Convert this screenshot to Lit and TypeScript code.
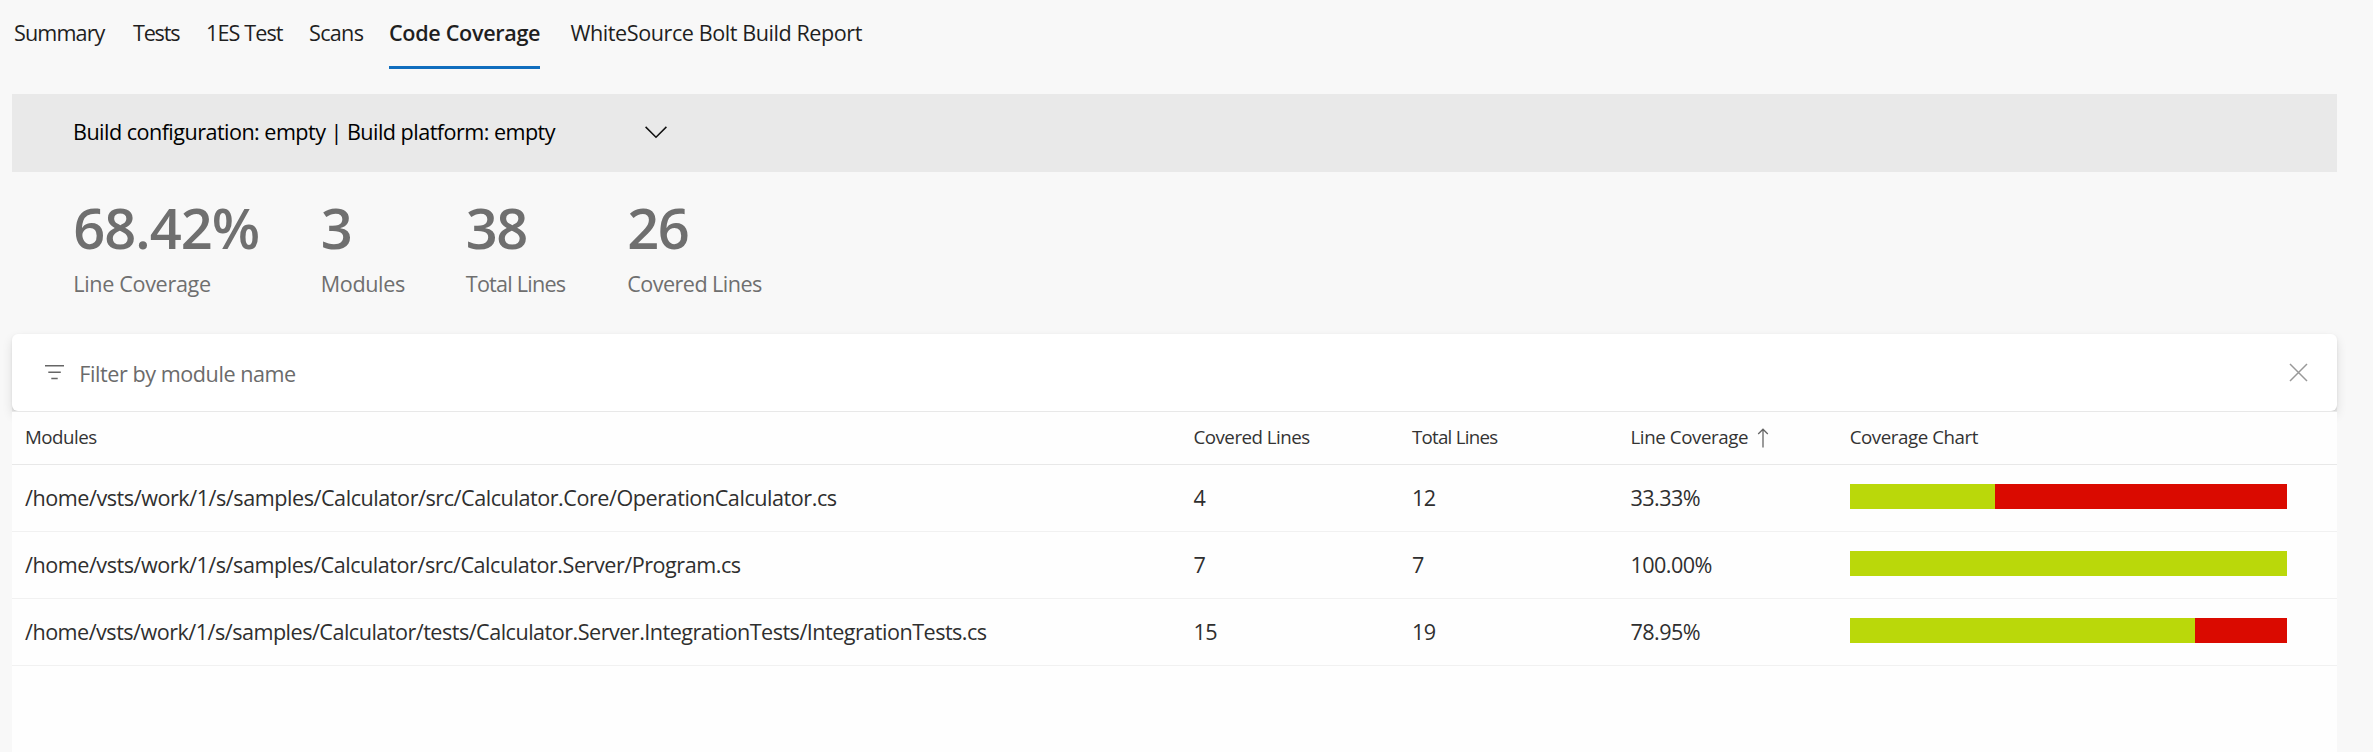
import { LitElement, html, css } from "lit";
import { customElement } from "lit/decorators.js";
import { classMap } from "lit/directives/class-map.js";

interface ModuleRow {
  path: string;
  covered: number;
  total: number;
}

const TABS = ["Summary", "Tests", "1ES Test", "Scans", "Code Coverage", "WhiteSource Bolt Build Report"];

const STATS = [
  { value: "68.42%", label: "Line Coverage" },
  { value: "3", label: "Modules" },
  { value: "38", label: "Total Lines" },
  { value: "26", label: "Covered Lines" },
];

const ROWS: ModuleRow[] = [
  { path: "/home/vsts/work/1/s/samples/Calculator/src/Calculator.Core/OperationCalculator.cs", covered: 4, total: 12 },
  { path: "/home/vsts/work/1/s/samples/Calculator/src/Calculator.Server/Program.cs", covered: 7, total: 7 },
  {
    path: "/home/vsts/work/1/s/samples/Calculator/tests/Calculator.Server.IntegrationTests/IntegrationTests.cs",
    covered: 15,
    total: 19,
  },
];

@customElement("coverage-bar")
class CoverageBar extends LitElement {
  static properties = { percent: { type: Number } };
  declare percent: number;

  static styles = css`
    :host { display: block; width: 437px; height: 25px; background: #da0a00; }
    .covered { height: 100%; background: #bad80a; }
  `;

  render() {
    return html`<div class="covered" style="width:${this.percent}%"></div>`;
  }
}

@customElement("coverage-table")
class CoverageTable extends LitElement {
  static styles = css`
    :host { display: block; background: #fefefe; flex: 1; color: #2f2f2f; border-top: 1px solid #e8e8e8; }
    .row {
      display: grid;
      grid-template-columns: 1168.5px 218.5px 218.5px 219.2px 437px;
      align-items: center;
      box-sizing: border-box;
      height: 67px;
      padding-left: 13px;
      padding-bottom: 2px;
      border-bottom: 1px solid #f1f1f1;
      white-space: nowrap;
      letter-spacing: -0.57px;
    }
    .head {
      height: 53px;
      padding-bottom: 4px;
      border-bottom-color: #e8e8e8;
      font-size: 18.72px;
      letter-spacing: -0.5px;
      color: #333;
    }
    .head :nth-child(3) { letter-spacing: -0.75px; }
    .head :nth-child(4) { letter-spacing: -0.4px; }
    .head :nth-child(5) { letter-spacing: -0.44px; }
    .row:nth-child(2) .path { letter-spacing: -0.456px; }
    .row:nth-child(3) .path { letter-spacing: -0.47px; }
    .row:nth-child(4) .path { letter-spacing: -0.515px; }
    .sorted { display: flex; align-items: center; gap: 9px; }
    .sorted svg { margin-top: 3px; }
    coverage-bar { margin-bottom: 1px; }
  `;

  render() {
    return html`
      <div class="row head">
        <span>Modules</span>
        <span>Covered Lines</span>
        <span>Total Lines</span>
        <span class="sorted">Line Coverage<svg width="12" height="20" viewBox="0 0 12 20" fill="none" stroke="#666" stroke-width="1.3"><path d="M6 19.5V1.2M1.2 6L6 1.2L10.8 6" /></svg></span>
        <span>Coverage Chart</span>
      </div>
      ${ROWS.map((r) => {
        const pct = (r.covered / r.total) * 100;
        return html`<div class="row">
          <span class="path">${r.path}</span>
          <span>${r.covered}</span>
          <span>${r.total}</span>
          <span>${pct.toFixed(2)}%</span>
          <coverage-bar .percent=${pct}></coverage-bar>
        </div>`;
      })}
    `;
  }
}

@customElement("app-root")
class AppRoot extends LitElement {
  static styles = css`
    :host {
      display: flex;
      flex-direction: column;
      box-sizing: border-box;
      height: 100vh;
      overflow: hidden;
      padding: 0 36px 0 12px;
      background: #f8f8f8;
      font-family: "Open Sans", "Noto Sans", sans-serif;
      font-size: 21.6px;
      color: #1f1f1f;
      white-space: nowrap;
    }
    .tabs {
      display: grid;
      grid-template-columns: 119px 73px 103px 80px 181.5px auto;
      justify-content: start;
      height: 94px;
      box-sizing: border-box;
      padding-left: 2px;
    }
    .tab { height: 66px; line-height: 65px; width: max-content; }
    .tab:nth-child(1) { letter-spacing: -0.88px; }
    .tab:nth-child(2) { letter-spacing: -1.2px; }
    .tab:nth-child(3) { letter-spacing: -0.9px; }
    .tab:nth-child(4) { letter-spacing: -0.7px; }
    .tab:nth-child(5) { letter-spacing: -0.325px; }
    .tab:nth-child(6) { letter-spacing: -0.44px; }
    .tab.active { font-weight: 600; width: 151px; border-bottom: 3px solid #106ebe; }
    .config {
      display: flex;
      align-items: center;
      height: 75px;
      padding: 0 0 3px 61px;
      background: #e9e9e9;
      color: #000;
    }
    .config span { width: 572px; letter-spacing: -0.54px; }
    .config svg { margin-top: 1px; }
    .stats {
      display: grid;
      grid-template-columns: 247.5px 145px 161.5px auto;
      justify-content: start;
      box-sizing: border-box;
      height: 162px;
      padding: 27px 0 0 61.3px;
      color: #6f6f6f;
    }
    .value { font-size: 56px; font-weight: 600; line-height: 57px; letter-spacing: -1.6px; }
    .stat:first-child .value { letter-spacing: -1px; }
    .label { line-height: 27px; margin-top: 14px; }
    .stat:nth-child(1) .label { letter-spacing: -0.345px; }
    .stat:nth-child(2) .label { letter-spacing: -0.385px; }
    .stat:nth-child(3) .label { letter-spacing: -0.78px; }
    .stat:nth-child(4) .label { letter-spacing: -0.56px; }
    .filter-wrap { background: linear-gradient(transparent 50%, #ececec 50%); }
    .filter {
      display: flex;
      align-items: center;
      box-sizing: border-box;
      height: 77px;
      padding: 0 29px 0 32px;
      background: #fff;
      border-radius: 6px;
      box-shadow: 0 5px 11px rgba(0, 0, 0, 0.11), 0 1px 3px rgba(0, 0, 0, 0.07);
      color: #6b6b6b;
    }
    .filter span { flex: 1; margin-left: 14.3px; padding-top: 2px; letter-spacing: -0.45px; }
    .filter svg { margin-bottom: 1px; }
    coverage-table { position: relative; }
    svg { display: block; flex: none; }
  `;

  render() {
    return html`
      <nav class="tabs">
        ${TABS.map((t) => html`<span class=${classMap({ tab: true, active: t === "Code Coverage" })}>${t}</span>`)}
      </nav>
      <div class="config">
        <span>Build configuration: empty | Build platform: empty</span>
        <svg width="22" height="13" viewBox="0 0 22 13" fill="none" stroke="#111" stroke-width="1.5"><path d="M0.6 0.9L11 11.3L21.4 0.9" /></svg>
      </div>
      <div class="stats">
        ${STATS.map((s) => html`<div class="stat"><div class="value">${s.value}</div><div class="label">${s.label}</div></div>`)}
      </div>
      <div class="filter-wrap">
        <div class="filter">
          <svg width="21" height="16" viewBox="0 0 21 16" fill="none" stroke="#666" stroke-width="1.4"><path d="M1 1.8H20M4.3 8.3H16.8M7.3 14.5H13.7" /></svg>
          <span>Filter by module name</span>
          <svg width="19" height="19" viewBox="0 0 19 19" fill="none" stroke="#999" stroke-width="1.5"><path d="M1 1L18 18M18 1L1 18" /></svg>
        </div>
      </div>
      <coverage-table></coverage-table>
    `;
  }
}
